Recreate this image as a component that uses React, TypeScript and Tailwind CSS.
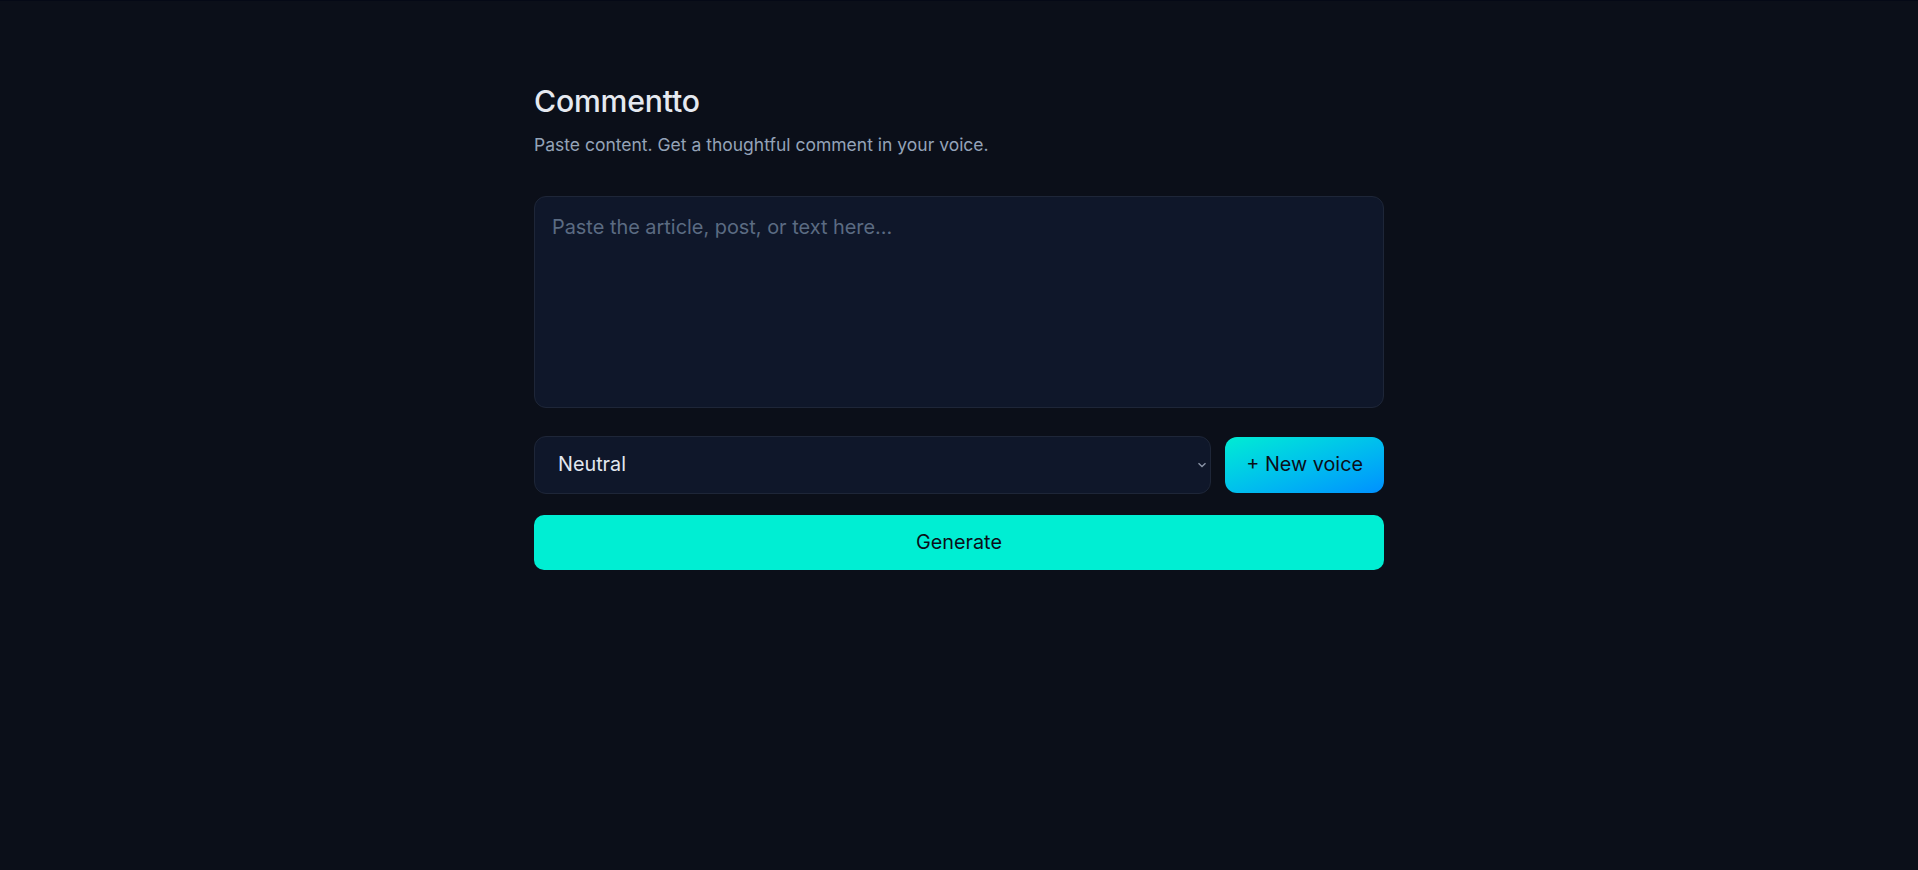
import { useState } from 'react';

export default function App() {
  const [text, setText] = useState('');
  const [voice, setVoice] = useState('Neutral');

  return (
    <div
      className="min-h-screen bg-[#0b0f19] border-t border-[#050916] text-[#e2e8f0]"
      style={{ fontFamily: 'Inter, "Noto Sans", sans-serif' }}
    >
      <div className="max-w-[850px] mx-auto pt-[82px]">
        <h1 className="text-[30.2px] leading-[36px] font-medium text-[#e5e9f0] tracking-[-0.2px]">Commentto</h1>
        <p className="mt-[13px] text-[17.5px] leading-[26px] text-[#94a3b8]">
          Paste content. Get a thoughtful comment in your voice.
        </p>

        <textarea
          value={text}
          onChange={(e) => setText(e.target.value)}
          placeholder="Paste the article, post, or text here..."
          className="mt-[38px] block w-full h-[212px] resize-none rounded-[12px] border border-[#1e2638] bg-[#0f172a] px-[17px] py-[15px] text-[19.9px] leading-[30px] text-[#e2e8f0] placeholder:text-[#5b6b82] outline-none"
        />

        <div className="mt-[28px] flex items-center gap-[14px]">
          <div className="relative flex-1">
            <select
              value={voice}
              onChange={(e) => setVoice(e.target.value)}
              className="block w-full h-[58px] appearance-none rounded-[12px] border border-[#1e2638] bg-[#0f172a] pl-[23px] pr-10 text-[19.8px] text-[#e2e8f0] outline-none"
            >
              <option>Neutral</option>
              <option>Friendly</option>
              <option>Professional</option>
            </select>
            <svg
              className="pointer-events-none absolute right-[4px] top-1/2 -translate-y-1/2"
              width="10"
              height="6"
              viewBox="0 0 10 6"
              fill="none"
            >
              <path d="M1.5 1.2 5 4.5 8.5 1.2" stroke="#8a94a6" strokeWidth="1.4" />
            </svg>
          </div>
          <button className="h-[56px] rounded-[12px] bg-gradient-to-br from-[#00ecd3] to-[#0090ff] px-[21px] text-[19.8px] text-[#0b0f19]">
            + New voice
          </button>
        </div>

        <button className="mt-[21px] w-full h-[55px] rounded-[10px] bg-[#00eed3] text-[19.8px] text-[#0b0f19]">
          Generate
        </button>
      </div>
    </div>
  );
}
